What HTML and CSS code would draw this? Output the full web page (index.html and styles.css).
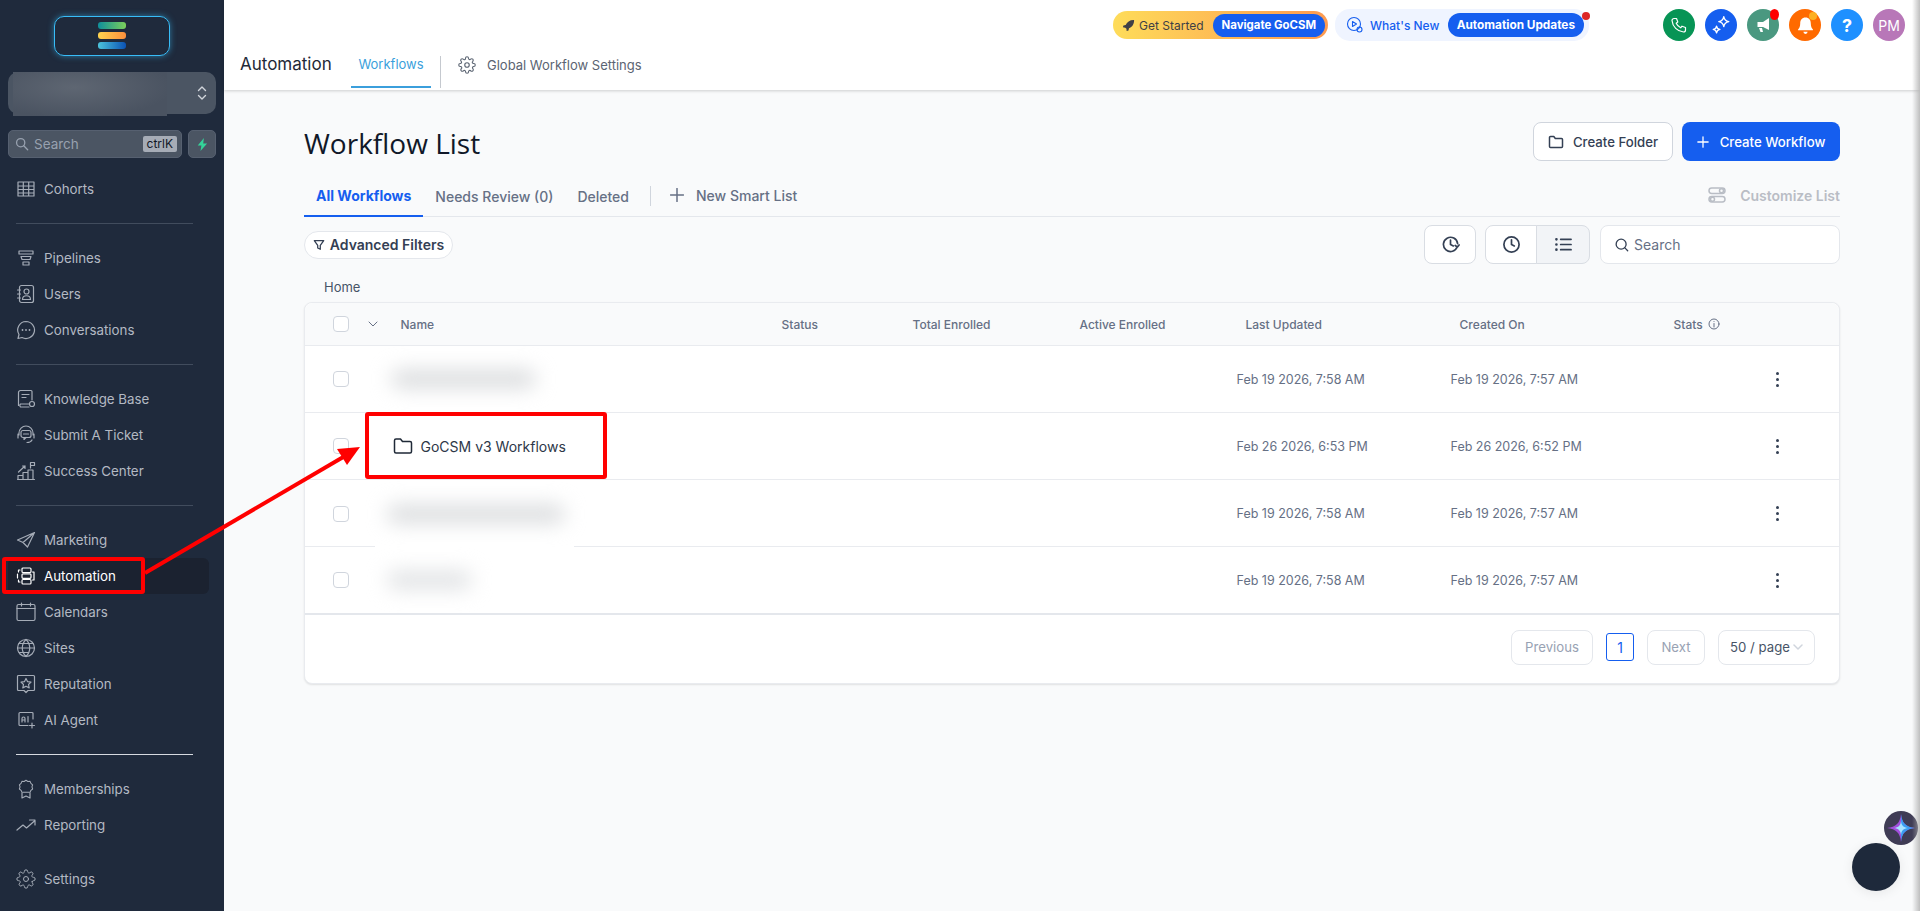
FILE: index.html
```html
<!DOCTYPE html>
<html lang="en">
<head>
    <meta charset="UTF-8">
    <meta name="viewport" content="width=device-width, initial-scale=1.0">
    <title>Automation - Workflow List</title>
    <link rel="stylesheet" href="styles.css">
</head>
<body>
<div class="app">
    <aside class="sidebar">
        <div class="logo">
            <span class="logo-bar bar-green"></span>
            <span class="logo-bar bar-orange"></span>
            <span class="logo-bar bar-blue"></span>
        </div>
        <div class="account">
            <div class="account-blur"></div>
            <svg class="account-arrows" viewBox="0 0 10 16" width="10" height="16"><path d="M1.500 5.500 5 2l3.500 3.500M1.500 10.500 5 14l3.500-3.500"/></svg>
        </div>
        <div class="search-row">
            <div class="side-search">
                <svg viewBox="0 0 16 16" width="14" height="14"><circle cx="6.500" cy="6.500" r="4.700"/><path d="m10 10 4.500 4.500"/></svg>
                <span class="side-search-text">Search</span>
                <span class="kbd">ctrlK</span>
            </div>
            <div class="bolt">
                <svg viewBox="0 0 12 14" width="11" height="13"><path d="M7.500 0 .8 8h4L3.800 14 11 5.800H6.800z"/></svg>
            </div>
        </div>

        <nav class="nav-group first">
            <a class="nav-item"><svg class="nav-icon" viewBox="0 0 20 20"><path d="M2 3h16v14H2zM2 7h16M2 10.500h16M2 14h16M7.300 3v14M12.700 3v14"/></svg>Cohorts</a>
        </nav>
        <div class="divider"></div>
        <nav class="nav-group">
            <a class="nav-item"><svg class="nav-icon" viewBox="0 0 20 20"><path d="M3 3h14v3H3zM5 8.500h10l-1 3H6zM7 14h6v3H7z"/></svg>Pipelines</a>
            <a class="nav-item"><svg class="nav-icon" viewBox="0 0 20 20"><rect x="3.500" y="1.500" width="14" height="17" rx="2"/><circle cx="10.500" cy="7.500" r="2.500"/><path d="M6.500 15.500c0-5 8-5 8 0zM1.500 6h3M1.500 10h3M1.500 14h3"/></svg>Users</a>
            <a class="nav-item"><svg class="nav-icon" viewBox="0 0 20 20"><path d="M10 1.500a8.500 8.500 0 1 1-4 16l-4 1 1-4a8.500 8.500 0 0 1 7-13z"/><path class="dots" d="M6.500 10h.01M10 10h.01M13.500 10h.01"/></svg>Conversations</a>
        </nav>
        <div class="divider"></div>
        <nav class="nav-group">
            <a class="nav-item"><svg class="nav-icon" viewBox="0 0 20 20"><path d="M13 15H4.500a2 2 0 0 0 0 3H13M2.500 16.500V3.500a2 2 0 0 1 2-2H15a1 1 0 0 1 1 1V11M6 5.500h7M6 8.500h4"/><circle cx="16" cy="15" r="2.500"/></svg>Knowledge Base</a>
            <a class="nav-item"><svg class="nav-icon" viewBox="0 0 20 20"><path d="M3 10V8a7 7 0 0 1 14 0v2M2 9v4M18 9v4M16 15c-1 2-3 2.500-5 2.500"/><rect x="5" y="5.500" width="10" height="7" rx="2"/><path d="M8 12.500v2l2-2M7.500 9h5"/></svg>Submit A Ticket</a>
            <a class="nav-item"><svg class="nav-icon" viewBox="0 0 20 20"><path d="M1.500 18.500h17M2 18.500v-4h5v4M7 18.500v-7h5v7M12 18.500V9h5v9.500M2.500 11 9 5M6.500 5H9v2.500M14.500 7V1.500h4v3h-4"/></svg>Success Center</a>
        </nav>
        <div class="divider"></div>
        <nav class="nav-group">
            <a class="nav-item"><svg class="nav-icon" viewBox="0 0 20 20"><path d="M18.500 2.500 1.500 10l5.500 2.500zM18.500 2.500 7 12.500 11.500 17z"/></svg>Marketing</a>
            <a class="nav-item active"><svg class="nav-icon" viewBox="0 0 20 20"><rect x="6" y="2" width="9" height="4.500" rx="1"/><rect x="6" y="7.800" width="9" height="4.500" rx="1"/><rect x="6" y="13.500" width="9" height="4.500" rx="1"/><path d="M4 4H2.500v2M1.500 8v4M2.500 14v2H4M16.500 6H18v8h-1.500"/></svg>Automation</a>
            <a class="nav-item"><svg class="nav-icon" viewBox="0 0 20 20"><rect x="1" y="2.500" width="18" height="16" rx="1.500"/><path d="M1 6.500h18M5.500 1v3M14.500 1v3"/></svg>Calendars</a>
            <a class="nav-item"><svg class="nav-icon" viewBox="0 0 20 20"><circle cx="10" cy="10" r="8.500"/><path d="M1.500 10h17M10 1.500c-5 5-5 12 0 17M10 1.500c5 5 5 12 0 17M3 5.500h14M3 14.500h10"/></svg>Sites</a>
            <a class="nav-item"><svg class="nav-icon" viewBox="0 0 20 20"><path d="M2.500 1.500h15a1 1 0 0 1 1 1v13a1 1 0 0 1-1 1H12l-2 2-2-2H2.500a1 1 0 0 1-1-1v-13a1 1 0 0 1 1-1z"/><path d="m10 4.500 1.600 3.200 3.400.4-2.500 2.400.7 3.400-3.200-1.700-3.200 1.700.7-3.400L5 8.100l3.400-.4z"/></svg>Reputation</a>
            <a class="nav-item"><svg class="nav-icon" viewBox="0 0 20 20"><path d="M17 9V3.500a1 1 0 0 0-1-1H4a1 1 0 0 0-1 1v11a1 1 0 0 0 1 1h8"/><path d="M6 12V8.500a1.500 1.500 0 0 1 3 0V12M6 10h3M12 6.500V12M16 13v5M13.500 15.500h5"/></svg>AI Agent</a>
        </nav>
        <div class="divider bright"></div>
        <nav class="nav-group">
            <a class="nav-item"><svg class="nav-icon" viewBox="0 0 20 20"><path d="M10 1.500l2.200 1.400 2.600-.1 1 2.400 2 1.600-.8 2.500.8 2.500-2 1.500-1 2.400H5.200l-1-2.400-2-1.500.8-2.500-.8-2.500 2-1.600 1-2.400 2.600.1z" transform="translate(1.500 0) scale(.85)"/><path d="M6 14v5l4-2 4 2v-5"/></svg>Memberships</a>
            <a class="nav-item"><svg class="nav-icon" viewBox="0 0 20 20"><path d="m1 15 6-5 3.500 3L19 5.500M13.500 5H19v5"/></svg>Reporting</a>
        </nav>
        <nav class="nav-group settings">
            <a class="nav-item"><svg class="nav-icon" viewBox="0 0 24 24"><circle cx="12" cy="12" r="3"/><path d="M19.400 15a1.650 1.650 0 0 0 .33 1.820l.06.06a2 2 0 1 1-2.830 2.830l-.06-.06a1.650 1.650 0 0 0-2.820 1.170V21a2 2 0 1 1-4 0v-.09a1.650 1.650 0 0 0-2.820-1.170l-.06.06a2 2 0 1 1-2.830-2.830l.06-.06A1.650 1.650 0 0 0 3.090 14H3a2 2 0 1 1 0-4h.09a1.650 1.650 0 0 0 1.170-2.820l-.06-.06a2 2 0 1 1 2.830-2.830l.06.06A1.650 1.650 0 0 0 10 3.090V3a2 2 0 1 1 4 0v.09a1.650 1.650 0 0 0 2.820 1.170l.06-.06a2 2 0 1 1 2.830 2.830l-.06.06A1.650 1.650 0 0 0 20.910 10H21a2 2 0 1 1 0 4h-.09a1.650 1.650 0 0 0-1.510 1z"/></svg>Settings</a>
        </nav>
    </aside>

    <div class="main">
        <header class="topbar">
            <div class="top-row">
                <div class="pill pill-start">
                    <svg viewBox="0 0 14 14" width="13" height="13"><path d="M13 1C8.500.8 5.500 3 4 6.500L1.500 7 1 9l2.500.3 1.300 1.300L5 13l2-.5.500-2.500C11 8.500 13.200 5.500 13 1z"/></svg>
                    <span class="pill-label">Get Started</span>
                    <span class="pill-inner">Navigate GoCSM</span>
                </div>
                <div class="pill pill-new">
                    <svg viewBox="0 0 18 18" width="18" height="18"><circle cx="8" cy="8" r="6.500"/><path d="m6.500 5.500 4 2.500-4 2.500z"/><circle cx="13.500" cy="13.500" r="2.500"/></svg>
                    <span class="pill-label">What's New</span>
                    <span class="pill-inner">Automation Updates</span>
                    <span class="red-dot"></span>
                </div>
                <div class="round-icons">
                    <span class="round green"><svg viewBox="0 0 18 18" width="18" height="18"><path d="M4 2.500h2.500l1.300 3.500-1.600 1.300a9 9 0 0 0 4.500 4.500l1.300-1.600 3.500 1.300V14a2 2 0 0 1-2 2C7.500 15.500 2.500 10.500 2 4.500a2 2 0 0 1 2-2z"/></svg></span>
                    <span class="round blue"><svg viewBox="0 0 18 18" width="20" height="20"><path d="M11.500 1.500c.5 3 1.500 4 4.500 4.500-3 .5-4 1.500-4.500 4.500-.5-3-1.500-4-4.500-4.500 3-.5 4-1.500 4.500-4.500zM5 10c.3 2 1 2.700 3 3-2 .3-2.700 1-3 3-.3-2-1-2.700-3-3 2-.3 2.700-1 3-3z"/></svg></span>
                    <span class="round teal"><svg class="solid" viewBox="0 0 18 18" width="18" height="18"><path d="M15 2v12L9 11H3.500V6H9zM5 12h3l1 4H6.500z"/></svg><span class="badge badge-red"></span></span>
                    <span class="round orange"><svg class="solid" viewBox="0 0 18 18" width="19" height="19"><path d="M9 1.500c3.300 0 5 2.500 5 5.500 0 3 1 4.500 2 5.500v1H2v-1c1-1 2-2.500 2-5.500 0-3 1.700-5.500 5-5.500zM7 15h4a2 2 0 0 1-4 0z"/></svg><span class="badge badge-yellow"></span></span>
                    <span class="round sky">?</span>
                    <span class="round avatar">PM</span>
                </div>
            </div>
            <div class="tab-row">
                <span class="page-name">Automation</span>
                <a class="top-tab">Workflows</a>
                <span class="top-sep"></span>
                <a class="top-link"><svg viewBox="0 0 24 24" width="18" height="18"><circle cx="12" cy="12" r="3"/><path d="M19.400 15a1.650 1.650 0 0 0 .33 1.820l.06.06a2 2 0 1 1-2.830 2.830l-.06-.06a1.650 1.650 0 0 0-2.820 1.170V21a2 2 0 1 1-4 0v-.09a1.650 1.650 0 0 0-2.820-1.170l-.06.06a2 2 0 1 1-2.830-2.830l.06-.06A1.650 1.650 0 0 0 3.090 14H3a2 2 0 1 1 0-4h.09a1.650 1.650 0 0 0 1.170-2.820l-.06-.06a2 2 0 1 1 2.830-2.830l.06.06A1.650 1.650 0 0 0 10 3.090V3a2 2 0 1 1 4 0v.09a1.650 1.650 0 0 0 2.820 1.170l.06-.06a2 2 0 1 1 2.830 2.830l-.06.06A1.650 1.650 0 0 0 20.910 10H21a2 2 0 1 1 0 4h-.09a1.650 1.650 0 0 0-1.510 1z"/></svg>Global Workflow Settings</a>
            </div>
        </header>

        <main class="content">
            <div class="title-row">
                <h1>Workflow List</h1>
                <div class="title-actions">
                    <button class="btn btn-white"><svg viewBox="0 0 16 16" width="16" height="16"><path d="M1.500 3.500a1 1 0 0 1 1-1h3.300l1.500 2h6.200a1 1 0 0 1 1 1v7a1 1 0 0 1-1 1h-11a1 1 0 0 1-1-1z"/></svg>Create Folder</button>
                    <button class="btn btn-blue"><svg viewBox="0 0 14 14" width="12" height="12"><path d="M7 1v12M1 7h12"/></svg>Create Workflow</button>
                </div>
            </div>

            <div class="list-tabs">
                <a class="list-tab selected">All Workflows</a>
                <a class="list-tab">Needs Review (0)</a>
                <a class="list-tab">Deleted</a>
                <span class="list-sep"></span>
                <a class="new-list"><svg viewBox="0 0 14 14" width="14" height="14"><path d="M7 .5v13M.5 7h13"/></svg>New Smart List</a>
                <a class="customize"><svg viewBox="0 0 18 16" width="18" height="16"><rect x="1" y="1" width="16" height="5.500" rx="2.700"/><rect x="1" y="9.500" width="16" height="5.500" rx="2.700"/><circle cx="13.500" cy="3.700" r="2"/><circle cx="4.500" cy="12.200" r="2"/></svg>Customize List</a>
            </div>

            <div class="toolbar">
                <button class="filter-pill"><svg viewBox="0 0 14 14" width="12" height="12"><path d="M1.500 2h11L8.500 7.500V12l-3-1.500v-3z"/></svg>Advanced Filters</button>
                <div class="tools">
                    <button class="tool-btn"><svg viewBox="0 0 20 20" width="19" height="19"><path d="M17.200 12.200A7.500 7.500 0 1 1 17.500 9M10 5.500V10l3 1.500M19 10.500l-1.700 2.200-2.300-1.700"/></svg></button>
                    <div class="tool-group">
                        <button class="tool-btn"><svg viewBox="0 0 20 20" width="19" height="19"><circle cx="10" cy="10" r="8"/><path d="M10 5v5l3 1.500"/></svg></button>
                        <button class="tool-btn on"><svg viewBox="0 0 18 18" width="17" height="17"><path d="M6 3.500h11M6 9h11M6 14.500h11"/><path class="dots" d="M1.500 3.500h.01M1.500 9h.01M1.500 14.500h.01"/></svg></button>
                    </div>
                    <div class="list-search">
                        <svg viewBox="0 0 16 16" width="14" height="14"><circle cx="7" cy="7" r="5.700"/><path d="m11 11 3.500 3.500"/></svg>
                        <span>Search</span>
                    </div>
                </div>
            </div>

            <div class="crumb">Home</div>

            <section class="table-card">
                <div class="t-row t-head">
                    <span class="cb"></span>
                    <svg class="head-chev" viewBox="0 0 10 6" width="10" height="6"><path d="m1 1 4 4 4-4"/></svg>
                    <span>Name</span>
                    <span>Status</span>
                    <span>Total Enrolled</span>
                    <span>Active Enrolled</span>
                    <span>Last Updated</span>
                    <span>Created On</span>
                    <span class="c-stats">Stats <svg viewBox="0 0 12 12" width="12" height="12"><circle cx="6" cy="6" r="5"/><path d="M6 5.500V9M6 3.500h.01"/></svg></span>
                </div>
                <div class="t-row t-body">
                    <span class="cb"></span>
                    <span></span>
                    <div class="blur-patch patch-one"><div class="smudge"></div></div>
                    <span></span><span></span><span></span>
                    <span class="date">Feb 19 2026, 7:58 AM</span>
                    <span class="date">Feb 19 2026, 7:57 AM</span>
                    <span class="more"><i></i><i></i><i></i></span>
                </div>
                <div class="t-row t-body">
                    <span class="cb"></span>
                    <span></span>
                    <div class="folder-name"><svg viewBox="0 0 20 18" width="20" height="18"><path d="M1.500 3.500a1.500 1.500 0 0 1 1.500-1.500h4.500l2 2.500H17a1.500 1.500 0 0 1 1.500 1.500v8.500a1.500 1.500 0 0 1-1.500 1.500H3a1.500 1.500 0 0 1-1.500-1.500z"/></svg>GoCSM v3 Workflows</div>
                    <span></span><span></span><span></span>
                    <span class="date">Feb 26 2026, 6:53 PM</span>
                    <span class="date">Feb 26 2026, 6:52 PM</span>
                    <span class="more"><i></i><i></i><i></i></span>
                </div>
                <div class="t-row t-body">
                    <span class="cb"></span>
                    <span></span>
                    <div class="blur-patch patch-two"><div class="smudge"></div></div>
                    <span></span><span></span><span></span>
                    <span class="date">Feb 19 2026, 7:58 AM</span>
                    <span class="date">Feb 19 2026, 7:57 AM</span>
                    <span class="more"><i></i><i></i><i></i></span>
                </div>
                <div class="t-row t-body t-last">
                    <span class="cb"></span>
                    <span></span>
                    <div class="blur-patch patch-three"><div class="smudge"></div></div>
                    <span></span><span></span><span></span>
                    <span class="date">Feb 19 2026, 7:58 AM</span>
                    <span class="date">Feb 19 2026, 7:57 AM</span>
                    <span class="more"><i></i><i></i><i></i></span>
                </div>
                <div class="pager">
                    <button class="page-btn btn-prev">Previous</button>
                    <button class="page-num">1</button>
                    <button class="page-btn btn-next">Next</button>
                    <button class="page-size">50 / page<svg viewBox="0 0 10 6" width="10" height="6"><path d="m1 1 4 4 4-4"/></svg></button>
                </div>
            </section>
        </main>
    </div>
</div>

<!-- screenshot annotation, sits on top of everything -->
<svg class="annotation" viewBox="0 0 1920 911" width="1920" height="911">
    <rect x="4" y="559" width="139" height="33" rx="1"/>
    <rect x="367" y="414" width="238" height="63" rx="1"/>
    <path d="M145 573 345 456"/>
    <path class="arrow-head" d="M360 447 337 449 347 465z"/>
</svg>

<div class="spark">
    <svg viewBox="0 0 34 34" width="34" height="34"><path class="spark-purple" d="M17 3c.8 9 5 13.200 14 14-9 .8-13.200 5-14 14-.8-9-5-13.200-14-14 9-.8 13.200-5 14-14z"/><path class="spark-blue" d="M17 3c.8 9 5 13.200 14 14-9 .8-13.200 5-14 14z"/><path class="spark-core" d="M17 10c.4 4.500 2.500 6.600 7 7-4.500.4-6.600 2.500-7 7-.4-4.500-2.500-6.600-7-7 4.500-.4 6.600-2.500 7-7z"/></svg>
</div>
<div class="chat-bubble"></div>
<div class="edge-shade"></div>
</body>
</html>
```

FILE: styles.css
```css
* {
    box-sizing: border-box;
}
html, body {
    margin: 0;
    height: 100%;
    overflow: hidden;
}
body {
    font-family: Inter, "Noto Sans", sans-serif;
    background-color: #f9fafb;
    color: #374151;
}
svg {
    fill: none;
    stroke: currentColor;
    stroke-width: 1.5;
    stroke-linecap: round;
    stroke-linejoin: round;
    flex-shrink: 0;
}
button {
    font-family: inherit;
    cursor: pointer;
}
.app {
    display: flex;
    height: 911px;
}

/* sidebar */
.sidebar {
    width: 224px;
    flex-shrink: 0;
    background: #1f2a3c;
    padding-top: 16px;
}
.logo {
    width: 116px;
    height: 40px;
    margin: 0 auto;
    border: 1px solid #38bdf8;
    border-radius: 10px;
    box-shadow: 0 0 6px rgba(56,189,248,0.55);
    display: flex;
    flex-direction: column;
    align-items: center;
    gap: 3px;
    padding-top: 5px;
}
.logo-bar {
    width: 28px;
    height: 7px;
    border-radius: 3px;
}
.bar-green { background: linear-gradient(90deg, #0e8f9c, #7ccf5a); }
.bar-orange { background: linear-gradient(90deg, #fdd34f, #fb8f3c); }
.bar-blue { background: linear-gradient(90deg, #4cc4dc, #0b52b4); }
.account {
    position: relative;
    height: 42px;
    margin: 16px 8px 0;
    background: #4b5563;
    border-radius: 10px;
    display: flex;
    align-items: center;
    justify-content: flex-end;
    padding-right: 9px;
    color: #d1d5db;
}
.account-blur {
    position: absolute;
    left: 5px;
    top: 0;
    width: 154px;
    height: 44px;
    background: radial-gradient(ellipse at 40% 35%, #5e6672, #4a5361 75%);
}
.account-arrows {
    stroke-width: 1.4;
}
.search-row {
    display: flex;
    gap: 6px;
    margin: 16px 8px 0;
    height: 28px;
}
.side-search {
    flex: 1;
    display: flex;
    align-items: center;
    background: #4b5563;
    border: 1px solid #566070;
    border-radius: 5px;
    padding: 0 4px 0 6px;
    color: #98a1af;
    font-size: 13.5px;
}
.side-search-text {
    margin-left: 5px;
    flex: 1;
}
.kbd {
    background: #a6acb6;
    color: #111827;
    font-size: 12px;
    padding: 0 4px;
    height: 16px;
    line-height: 16px;
    border-radius: 2px;
}
.bolt {
    width: 28px;
    background: #4b5563;
    border: 1px solid #566070;
    border-radius: 5px;
    display: flex;
    align-items: center;
    justify-content: center;
}
.bolt svg {
    fill: #34d399;
    stroke: none;
}
.nav-group {
    display: flex;
    flex-direction: column;
}
.nav-group.first {
    margin-top: 13px;
}
.nav-group.settings {
    margin-top: 18px;
}
.nav-item {
    height: 36px;
    margin: 0 15px 0 8px;
    padding-left: 8px;
    display: flex;
    align-items: center;
    gap: 8px;
    font-size: 13.33px;
    color: #b3b9c3;
    border-radius: 6px;
}
.nav-icon {
    width: 20px;
    height: 20px;
    color: #a5acb7;
    stroke-width: 1.200;
}
.nav-icon .dots {
    stroke-width: 1.800;
}
.nav-item.active {
    background: #1b2230;
    color: #fff;
}
.nav-item.active .nav-icon {
    color: #fff;
}
.divider {
    height: 1px;
    margin: 16px 31px 16px 16px;
    background: #414c5d;
}
.divider.bright {
    background: #d6dae0;
}

/* top header */
.main {
    flex: 1;
    display: flex;
    flex-direction: column;
    min-width: 0;
}
.topbar {
    height: 90px;
    background: #fff;
    box-shadow: 0 1px 3px rgba(0,0,0,0.18);
    position: relative;
}
.top-row {
    height: 48px;
    display: flex;
    align-items: flex-start;
    padding-top: 9px;
    padding-left: 889px;
}
.pill {
    position: relative;
    display: flex;
    align-items: center;
    border-radius: 15px;
    font-size: 12px;
}
.pill-start {
    width: 215px;
    height: 28px;
    margin-top: 2px;
    padding: 0 3px 0 9px;
    background: linear-gradient(90deg, #fedc5a, #fd9a50);
    color: #3f3f46;
}
.pill-start svg {
    fill: #3f3f46;
    stroke: none;
}
.pill-label {
    margin-left: 4px;
    flex: 1;
    white-space: nowrap;
}
.pill-inner {
    background: #155eef;
    color: #fff;
    font-size: 11.4px;
    font-weight: 700;
    border-radius: 12px;
    height: 23px;
    line-height: 23px;
    padding: 0 9px;
    white-space: nowrap;
}
.pill-new {
    width: 254px;
    height: 32px;
    margin-left: 7px;
    padding: 0 5px 0 11px;
    background: #eff4ff;
    color: #155eef;
    font-weight: 500;
}
.pill-new svg {
    stroke-width: 1.100;
}
.pill-new .pill-label {
    margin-left: 6px;
}
.pill-new .pill-inner {
    height: 24px;
    line-height: 24px;
    font-size: 11.8px;
}
.red-dot {
    position: absolute;
    right: -1px;
    top: 3px;
    width: 8px;
    height: 8px;
    border-radius: 50%;
    background: #dc2626;
}
.round-icons {
    display: flex;
    gap: 10px;
    margin-left: 74px;
}
.round {
    position: relative;
    width: 32px;
    height: 32px;
    border-radius: 50%;
    display: flex;
    align-items: center;
    justify-content: center;
    color: #fff;
    font-size: 14px;
}
.round svg {
    stroke-width: 1.200;
}
.round svg.solid {
    fill: #fff;
    stroke: none;
}
.green { background: #079455; }
.blue { background: #155eef; }
.teal { background: #4a9880; }
.orange { background: #ff6a00; }
.sky { background: #1e90ff; font-size: 18px; font-weight: 700; }
.avatar { background: #b877b8; }
.badge {
    position: absolute;
    border-radius: 50%;
}
.badge-red {
    right: 0;
    top: 0;
    width: 9px;
    height: 11px;
    background: #f00;
}
.badge-yellow {
    right: 4px;
    top: 3px;
    width: 8px;
    height: 8px;
    background: #fdb022;
}
.tab-row {
    height: 40px;
    display: flex;
    align-items: center;
    padding: 0 0 0 16px;
}
.page-name {
    width: 90px;
    font-size: 17px;
    color: #1f2937;
    white-space: nowrap;
    margin-bottom: 8px;
}
.top-tab {
    margin-left: 21px;
    width: 80px;
    height: 40px;
    padding-bottom: 6px;
    display: flex;
    align-items: center;
    justify-content: center;
    border-bottom: 2px solid #3b9fdc;
    color: #3b9fdc;
    font-size: 13px;
}
.top-sep {
    width: 1px;
    height: 32px;
    align-self: flex-end;
    margin: 0 17px 0 9px;
    background: #c5c9cf;
}
.top-link {
    display: flex;
    align-items: center;
    gap: 11px;
    font-size: 13px;
    color: #5b6472;
    margin-bottom: 6px;
}

/* workflow list */
.content {
    padding: 32px 80px 0;
}
.title-row {
    display: flex;
    justify-content: space-between;
    align-items: center;
    height: 39px;
}
h1 {
    margin: 2px 0 0;
    font-family: "Open Sans", sans-serif;
    font-size: 28px;
    font-weight: 400;
    color: #101828;
}
.title-actions {
    display: flex;
    gap: 9px;
}
.btn {
    height: 39px;
    border-radius: 8px;
    display: flex;
    align-items: center;
    font-size: 13.2px;
    font-weight: 500;
}
.btn-white {
    width: 140px;
    justify-content: center;
    gap: 9px;
    background: #fff;
    border: 1px solid #d0d5dd;
    color: #344054;
}
.btn-blue {
    width: 158px;
    justify-content: center;
    gap: 11px;
    background: #155eef;
    border: none;
    color: #fff;
}
.list-tabs {
    display: flex;
    align-items: center;
    height: 41px;
    margin-top: 15px;
    border-bottom: 1px solid #e4e7ec;
    font-size: 14px;
}
.list-tab {
    height: 41px;
    margin-bottom: -1px;
    padding: 0 12px;
    display: flex;
    align-items: center;
    font-weight: 500;
    color: #667085;
    white-space: nowrap;
}
.list-tab.selected {
    color: #155eef;
    font-weight: 700;
    border-bottom: 2px solid #155eef;
}
.list-sep {
    width: 1px;
    height: 20px;
    margin: 0 19px 0 9px;
    background: #d0d5dd;
}
.new-list {
    display: flex;
    align-items: center;
    gap: 12px;
    color: #667085;
    font-weight: 500;
    margin-bottom: 2px;
}
.customize {
    margin-left: auto;
    display: flex;
    align-items: center;
    gap: 14px;
    color: #b9bdc5;
    font-weight: 600;
    margin-bottom: 2px;
}
.toolbar {
    display: flex;
    justify-content: space-between;
    align-items: center;
    height: 39px;
    margin-top: 8px;
}
.filter-pill {
    width: 149px;
    height: 28px;
    background: #fff;
    border: 1px solid #e4e7ec;
    border-radius: 14px;
    display: flex;
    align-items: center;
    justify-content: center;
    gap: 5px;
    font-size: 14px;
    font-weight: 600;
    color: #344054;
}
.tools {
    display: flex;
    gap: 9px;
}
.tool-btn {
    width: 52px;
    height: 39px;
    background: #fff;
    border: 1px solid #d9dde3;
    border-radius: 8px;
    display: flex;
    align-items: center;
    justify-content: center;
    color: #344054;
}
.tool-btn svg {
    stroke-width: 1.800;
}
.tool-btn .dots {
    stroke-width: 2.800;
}
.tool-group {
    display: flex;
    margin-right: 1px;
}
.tool-group .tool-btn {
    border-radius: 8px 0 0 8px;
}
.tool-group .tool-btn.on {
    width: 54px;
    margin-left: -1px;
    border-radius: 0 8px 8px 0;
    background: #f2f4f7;
}
.list-search {
    width: 240px;
    height: 39px;
    background: #fff;
    border: 1px solid #e4e7ec;
    border-radius: 8px;
    display: flex;
    align-items: center;
    gap: 5px;
    padding-left: 14px;
    font-size: 14px;
    color: #667085;
}
.list-search svg {
    color: #344054;
}
.crumb {
    height: 38px;
    padding: 14px 0 0 20px;
    font-size: 13px;
    line-height: 18px;
    color: #475467;
}
.table-card {
    border: 1px solid #e9ebef;
    border-radius: 8px;
    box-shadow: 0 1px 2px rgba(0,0,0,0.1);
    background: #fff;
}
.t-row {
    display: grid;
    grid-template-columns: 28px 39.500px 381px 131px 167px 166px 214px 214px 1fr;
    align-items: center;
    padding-left: 28px;
}
.t-head {
    height: 43px;
    background: #f9fafb;
    border-bottom: 1px solid #e9ebef;
    border-radius: 8px 8px 0 0;
    font-size: 12px;
    font-weight: 500;
    color: #667085;
}
.t-body {
    height: 67px;
    border-bottom: 1px solid #e9ebef;
}
.t-last {
    height: 68px;
    border-bottom: 2px solid #e4e7ec;
}
.c-stats {
    display: flex;
    align-items: center;
    gap: 5px;
}
.c-stats svg {
    stroke-width: 1;
}
.cb {
    width: 16px;
    height: 16px;
    background: #fff;
    border: 1px solid #d0d5dd;
    border-radius: 4px;
}
.head-chev {
    margin-left: 7px;
    color: #667085;
    stroke-width: 1;
}
.date {
    font-size: 12.500px;
    color: #667085;
    margin-left: -9px;
    white-space: nowrap;
}
.more {
    display: flex;
    flex-direction: column;
    gap: 3px;
    margin-left: 102px;
    width: 3px;
}
.more i {
    width: 3px;
    height: 3px;
    border-radius: 50%;
    background: #344054;
}
.folder-name {
    display: flex;
    align-items: center;
    gap: 8px;
    margin-left: -8px;
    font-size: 14px;
    color: #2d3748;
    white-space: nowrap;
}
.folder-name svg {
    color: #1f2937;
}
.blur-patch {
    background: #fff;
    position: relative;
    display: flex;
    align-items: center;
}
.patch-one { width: 167px; height: 50px; margin-left: -21.500px; }
.patch-two { width: 199px; height: 67px; margin-left: -25.500px; align-self: start; }
.patch-three { width: 199px; height: 50px; margin-left: -25.500px; }
.smudge {
    height: 18px;
    margin-left: 12px;
    width: 145px;
    background: #d9dbdd;
    border-radius: 9px;
    filter: blur(10px);
}
.patch-two .smudge { width: 178px; }
.patch-three .smudge { width: 85px; background: #e0e2e4; }
.pager {
    height: 68px;
    padding-bottom: 4px;
    display: flex;
    align-items: center;
    justify-content: flex-end;
    gap: 13px;
    padding-right: 24px;
    border-radius: 0 0 8px 8px;
}
.page-btn, .page-size {
    height: 35px;
    background: #fff;
    border: 1px solid #e4e7ec;
    border-radius: 8px;
    font-size: 13.2px;
    color: #98a2b3;
}
.btn-prev { width: 82px; padding: 0; }
.btn-next { width: 58px; padding: 0; }
.page-num {
    width: 28px;
    height: 28px;
    background: #fff;
    border: 1px solid #155eef;
    border-radius: 3px;
    font-size: 14px;
    color: #155eef;
    padding: 0;
}
.page-size {
    width: 97px;
    color: #475467;
    display: flex;
    align-items: center;
    justify-content: center;
    gap: 3px;
    padding: 0;
}
.page-size svg {
    color: #d0d5dd;
}

/* things lying over the page */
.annotation {
    position: absolute;
    left: 0;
    top: 0;
    pointer-events: none;
}
.annotation rect, .annotation path {
    fill: none;
    stroke: #f00;
    stroke-width: 4;
    stroke-linecap: butt;
}
.annotation .arrow-head {
    fill: #f00;
    stroke: none;
}
.spark {
    position: absolute;
    left: 1884px;
    top: 811px;
    width: 34px;
    height: 34px;
    border-radius: 50%;
    background: #3f3c55;
}
.spark svg {
    stroke: none;
}
.spark-purple { fill: #a24fdc; }
.spark-blue { fill: #3a9cf0; }
.spark-core { fill: #a9e2ff; }
.chat-bubble {
    position: absolute;
    left: 1852px;
    top: 843px;
    width: 48px;
    height: 48px;
    border-radius: 50%;
    background: #1e293b;
    box-shadow: 0 2px 12px rgba(0,0,0,0.08);
}
.edge-shade {
    position: absolute;
    right: 0;
    top: 0;
    width: 8px;
    height: 911px;
    background: linear-gradient(90deg, rgba(170,170,170,0), rgba(170,170,170,0.75));
}
```
